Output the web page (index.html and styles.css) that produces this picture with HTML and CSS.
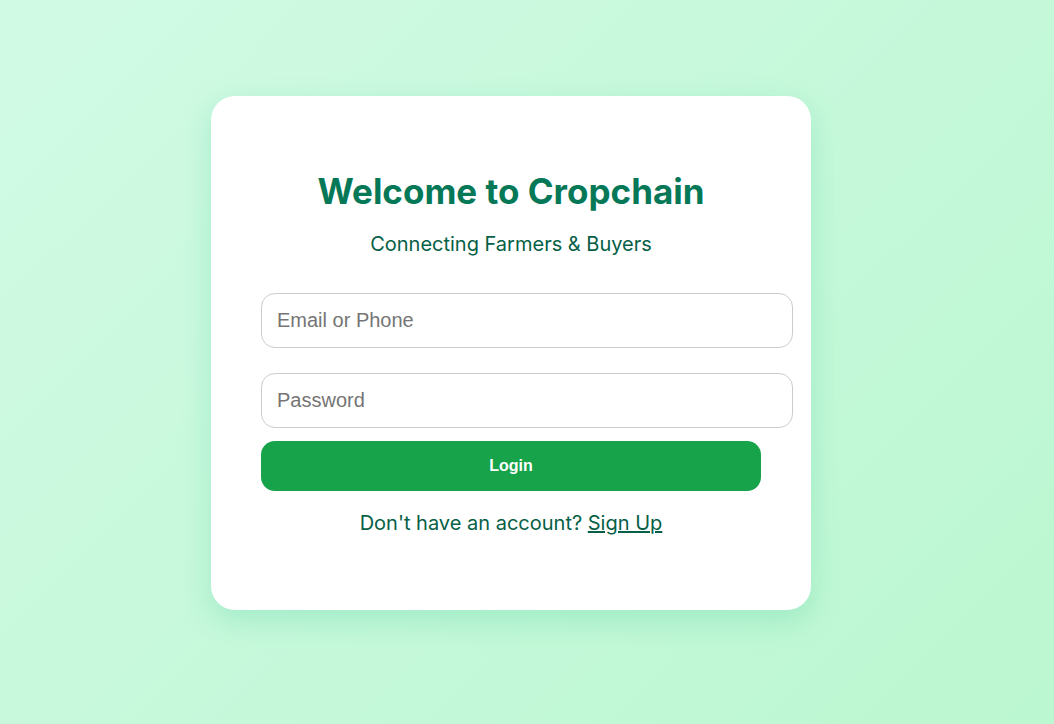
FILE: index.html
```html
<!DOCTYPE html>
<html>
<head>
<meta charset="utf-8">
<link rel="stylesheet" href="styles.css">
</head>
<body>
<div class="page">
  <div class="card">
    <h1 class="title">Welcome to Cropchain</h1>
    <p class="subtitle">Connecting Farmers &amp; Buyers</p>
    <form class="form">
      <input class="field" type="text" placeholder="Email or Phone">
      <input class="field field-pw" type="password" placeholder="Password">
      <button class="btn" type="button">Login</button>
    </form>
    <p class="footer">Don't have an account? <a class="link" href="#">Sign Up</a></p>
  </div>
</div>
</body>
</html>
```

FILE: styles.css
```css
html, body {
  margin: 0;
  padding: 0;
}
body {
  font-family: Inter, "Liberation Sans", sans-serif;
}
.page {
  height: 724px;
  box-sizing: border-box;
  background: linear-gradient(135deg, #d1fae5 0%, #bbf7d0 100%);
  display: flex;
  align-items: center;
  justify-content: center;
}
.card {
  width: 500px;
  padding: 50px;
  background: #ffffff;
  border-radius: 24px;
  box-shadow: 0 10px 30px rgba(16, 185, 129, 0.2);
  margin-right: 32px;
  margin-bottom: 18px;
  text-align: center;
}
.title {
  margin: 24px 0 0;
  font-size: 35px;
  font-weight: 700;
  color: #047857;
  line-height: 42px;
}
.subtitle {
  margin: 20px 0 0;
  font-size: 20px;
  line-height: 24px;
  color: #065f46;
}
.form {
  margin-top: 37px;
  display: flex;
  flex-direction: column;
  align-items: flex-start;
}
.field {
  width: 100%;
  padding: 15px;
  border: 1px solid #cccccc;
  border-radius: 14px;
  font-family: "Liberation Sans", Arial, sans-serif;
  font-size: 20px;
  line-height: 23px;
  box-sizing: content-box;
  height: 23px;
  margin: 0;
  outline: none;
}
.field::placeholder {
  color: #757575;
}
.field-pw {
  margin-top: 25px;
}
.btn {
  margin-top: 13px;
  width: 500px;
  height: 50px;
  border: none;
  border-radius: 14px;
  background: #16a34a;
  color: #ffffff;
  font-family: "Liberation Sans", Arial, sans-serif;
  font-size: 16px;
  font-weight: 700;
}
.footer {
  margin: 20px 0 25px;
  font-size: 20px;
  line-height: 24px;
  color: #065f46;
}
.link {
  color: #065f46;
  text-decoration: underline;
}
```
